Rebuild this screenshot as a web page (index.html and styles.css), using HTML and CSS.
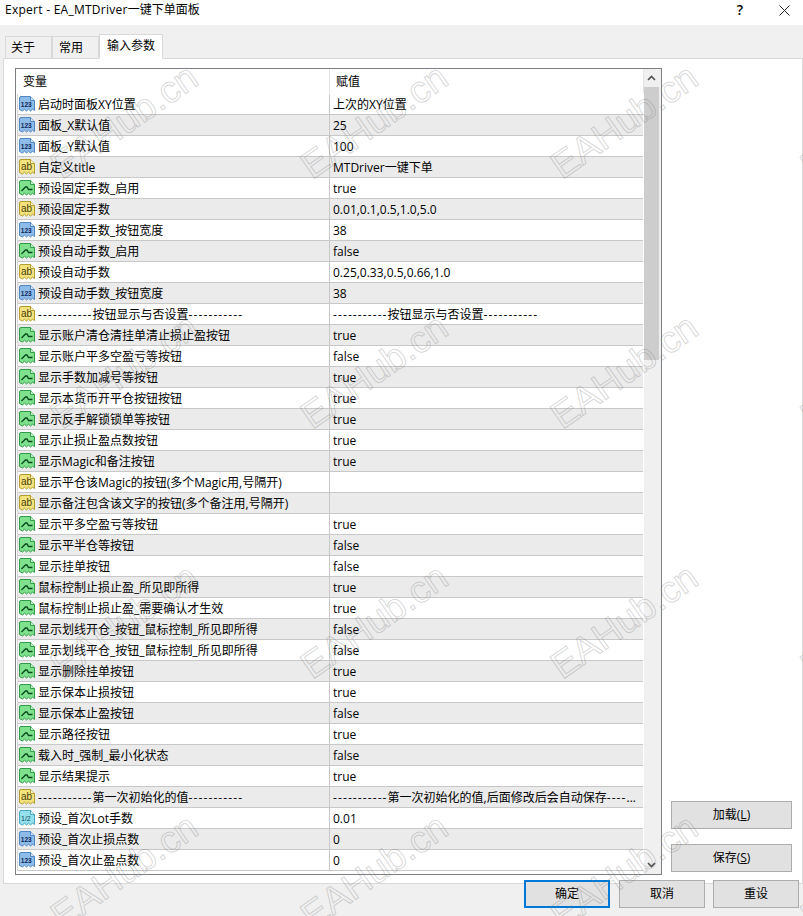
FILE: index.html
```html
<!DOCTYPE html>
<html lang="zh-CN">
<head>
<meta charset="utf-8">
<title>Expert - EA_MTDriver一键下单面板</title>
<link rel="stylesheet" href="styles.css">
</head>
<body>
<svg class="sprite" aria-hidden="true">
  <symbol id="i-blue" viewBox="0 0 16 16">
    <path class="doc-blue" d="M.5 2Q.5.5 2 .5H11.5L15.5 4.5V14.5L13.5 13.2 11.5 15 9.5 13.2 7.5 15 5.5 13.2 3.5 15 .5 13.5Z"/>
    <path class="fold-blue" d="M11.5.5V4.5H15.5"/>
    <text class="ico-num" x="1.7" y="11">123</text>
  </symbol>
  <symbol id="i-yellow" viewBox="0 0 16 16">
    <path class="doc-yellow" d="M.5 2Q.5.5 2 .5H11.5L15.5 4.5V14.5L13.5 13.2 11.5 15 9.5 13.2 7.5 15 5.5 13.2 3.5 15 .5 13.5Z"/>
    <path class="fold-yellow" d="M11.5.5V4.5H15.5"/>
    <text class="ico-ab" x="2" y="11">ab</text>
  </symbol>
  <symbol id="i-green" viewBox="0 0 16 16">
    <path class="doc-green" d="M.5 2Q.5.5 2 .5H11.5L15.5 4.5V14.5L13.5 13.2 11.5 15 9.5 13.2 7.5 15 5.5 13.2 3.5 15 .5 13.5Z"/>
    <path class="fold-green" d="M11.5.5V4.5H15.5"/>
    <path class="zig" d="M2.5 11L6.5 7H8L9.5 9.5H13.5"/>
  </symbol>
  <symbol id="i-cyan" viewBox="0 0 16 16">
    <path class="doc-cyan" d="M.5 2Q.5.5 2 .5H11.5L15.5 4.5V14.5L13.5 13.2 11.5 15 9.5 13.2 7.5 15 5.5 13.2 3.5 15 .5 13.5Z"/>
    <path class="fold-cyan" d="M11.5.5V4.5H15.5"/>
    <text class="ico-frac" x="2" y="10.5">1/2</text>
  </symbol>
</svg>
<div class="window">
  <header class="titlebar">
    <div class="title"><span class="title-latin">Expert - EA_MTDriver</span>一键下单面板</div>
    <div class="help">?</div>
    <svg class="close" viewBox="0 0 11 11" aria-hidden="true"><path d="M.5.5L10.5 10.5M10.5.5L.5 10.5"/></svg>
  </header>
  <nav class="tabs">
    <div class="tab">关于</div>
    <div class="tab tab-two">常用</div>
    <div class="tab tab-on">输入参数</div>
  </nav>
  <main class="panel">
    <section class="list">
      <div class="table">
        <div class="head"><div class="head-name">变量</div><div class="head-val">赋值</div></div>
        <div class="rows">
          <div class="row"><div class="name"><svg class="ico"><use href="#i-blue"/></svg>启动时面板XY位置</div><div class="val">上次的XY位置</div></div>
          <div class="row"><div class="name"><svg class="ico"><use href="#i-blue"/></svg>面板_X默认值</div><div class="val">25</div></div>
          <div class="row"><div class="name"><svg class="ico"><use href="#i-blue"/></svg>面板_Y默认值</div><div class="val">100</div></div>
          <div class="row"><div class="name"><svg class="ico"><use href="#i-yellow"/></svg>自定义title</div><div class="val">MTDriver一键下单</div></div>
          <div class="row"><div class="name"><svg class="ico"><use href="#i-green"/></svg>预设固定手数_启用</div><div class="val">true</div></div>
          <div class="row"><div class="name"><svg class="ico"><use href="#i-yellow"/></svg>预设固定手数</div><div class="val">0.01,0.1,0.5,1.0,5.0</div></div>
          <div class="row"><div class="name"><svg class="ico"><use href="#i-blue"/></svg>预设固定手数_按钮宽度</div><div class="val">38</div></div>
          <div class="row"><div class="name"><svg class="ico"><use href="#i-green"/></svg>预设自动手数_启用</div><div class="val">false</div></div>
          <div class="row"><div class="name"><svg class="ico"><use href="#i-yellow"/></svg>预设自动手数</div><div class="val">0.25,0.33,0.5,0.66,1.0</div></div>
          <div class="row"><div class="name"><svg class="ico"><use href="#i-blue"/></svg>预设自动手数_按钮宽度</div><div class="val">38</div></div>
          <div class="row"><div class="name"><svg class="ico"><use href="#i-yellow"/></svg><span class="dash">-----------</span>按钮显示与否设置<span class="dash">-----------</span></div><div class="val"><span class="dash">-----------</span>按钮显示与否设置<span class="dash">-----------</span></div></div>
          <div class="row"><div class="name"><svg class="ico"><use href="#i-green"/></svg>显示账户清仓清挂单清止损止盈按钮</div><div class="val">true</div></div>
          <div class="row"><div class="name"><svg class="ico"><use href="#i-green"/></svg>显示账户平多空盈亏等按钮</div><div class="val">false</div></div>
          <div class="row"><div class="name"><svg class="ico"><use href="#i-green"/></svg>显示手数加减号等按钮</div><div class="val">true</div></div>
          <div class="row"><div class="name"><svg class="ico"><use href="#i-green"/></svg>显示本货币开平仓按钮按钮</div><div class="val">true</div></div>
          <div class="row"><div class="name"><svg class="ico"><use href="#i-green"/></svg>显示反手解锁锁单等按钮</div><div class="val">true</div></div>
          <div class="row"><div class="name"><svg class="ico"><use href="#i-green"/></svg>显示止损止盈点数按钮</div><div class="val">true</div></div>
          <div class="row"><div class="name"><svg class="ico"><use href="#i-green"/></svg>显示Magic和备注按钮</div><div class="val">true</div></div>
          <div class="row"><div class="name"><svg class="ico"><use href="#i-yellow"/></svg>显示平仓该Magic的按钮(多个Magic用,号隔开)</div><div class="val"></div></div>
          <div class="row"><div class="name"><svg class="ico"><use href="#i-yellow"/></svg>显示备注包含该文字的按钮(多个备注用,号隔开)</div><div class="val"></div></div>
          <div class="row"><div class="name"><svg class="ico"><use href="#i-green"/></svg>显示平多空盈亏等按钮</div><div class="val">true</div></div>
          <div class="row"><div class="name"><svg class="ico"><use href="#i-green"/></svg>显示平半仓等按钮</div><div class="val">false</div></div>
          <div class="row"><div class="name"><svg class="ico"><use href="#i-green"/></svg>显示挂单按钮</div><div class="val">false</div></div>
          <div class="row"><div class="name"><svg class="ico"><use href="#i-green"/></svg>鼠标控制止损止盈_所见即所得</div><div class="val">true</div></div>
          <div class="row"><div class="name"><svg class="ico"><use href="#i-green"/></svg>鼠标控制止损止盈_需要确认才生效</div><div class="val">true</div></div>
          <div class="row"><div class="name"><svg class="ico"><use href="#i-green"/></svg>显示划线开仓_按钮_鼠标控制_所见即所得</div><div class="val">false</div></div>
          <div class="row"><div class="name"><svg class="ico"><use href="#i-green"/></svg>显示划线平仓_按钮_鼠标控制_所见即所得</div><div class="val">false</div></div>
          <div class="row"><div class="name"><svg class="ico"><use href="#i-green"/></svg>显示删除挂单按钮</div><div class="val">true</div></div>
          <div class="row"><div class="name"><svg class="ico"><use href="#i-green"/></svg>显示保本止损按钮</div><div class="val">true</div></div>
          <div class="row"><div class="name"><svg class="ico"><use href="#i-green"/></svg>显示保本止盈按钮</div><div class="val">false</div></div>
          <div class="row"><div class="name"><svg class="ico"><use href="#i-green"/></svg>显示路径按钮</div><div class="val">true</div></div>
          <div class="row"><div class="name"><svg class="ico"><use href="#i-green"/></svg>载入时_强制_最小化状态</div><div class="val">false</div></div>
          <div class="row"><div class="name"><svg class="ico"><use href="#i-green"/></svg>显示结果提示</div><div class="val">true</div></div>
          <div class="row"><div class="name"><svg class="ico"><use href="#i-yellow"/></svg><span class="dash">-----------</span>第一次初始化的值<span class="dash">-----------</span></div><div class="val"><span class="dash">-----------</span>第一次初始化的值,后面修改后会自动保存<span class="dash">----</span>...</div></div>
          <div class="row"><div class="name"><svg class="ico"><use href="#i-cyan"/></svg>预设_首次Lot手数</div><div class="val">0.01</div></div>
          <div class="row"><div class="name"><svg class="ico"><use href="#i-blue"/></svg>预设_首次止损点数</div><div class="val">0</div></div>
          <div class="row"><div class="name"><svg class="ico"><use href="#i-blue"/></svg>预设_首次止盈点数</div><div class="val">0</div></div>
        </div>
      </div>
      <div class="scrollbar">
        <div class="sb-btn"><svg class="chev" viewBox="0 0 9 6" aria-hidden="true"><path d="M1 5L4.5 1.5 8 5"/></svg></div>
        <div class="sb-thumb"></div>
        <div class="sb-track"></div>
        <div class="sb-btn"><svg class="chev" viewBox="0 0 9 6" aria-hidden="true"><path d="M1 1L4.5 4.5 8 1"/></svg></div>
      </div>
    </section>
    <aside class="side">
      <button class="btn btn-side">加载(<u>L</u>)</button>
      <button class="btn btn-side">保存(<u>S</u>)</button>
    </aside>
  </main>
  <footer class="footer">
    <button class="btn btn-foot btn-default">确定</button>
    <button class="btn btn-foot">取消</button>
    <button class="btn btn-foot">重设</button>
  </footer>
  <div class="marks" aria-hidden="true">
    <span class="mark">EAHub.cn</span><span class="mark">EAHub.cn</span><span class="mark">EAHub.cn</span><span class="mark">EAHub.cn</span>
    <span class="mark">EAHub.cn</span><span class="mark">EAHub.cn</span><span class="mark">EAHub.cn</span><span class="mark">EAHub.cn</span>
    <span class="mark">EAHub.cn</span><span class="mark">EAHub.cn</span><span class="mark">EAHub.cn</span><span class="mark">EAHub.cn</span>
    <span class="mark">EAHub.cn</span><span class="mark">EAHub.cn</span><span class="mark">EAHub.cn</span><span class="mark">EAHub.cn</span>
  </div>
</div>
</body>
</html>
```
FILE: styles.css
```css
* { box-sizing: border-box; }
html, body { margin: 0; padding: 0; }
body {
  font-family: "Open Sans", "Noto Sans CJK SC", sans-serif;
  font-size: 12px;
  color: #000;
  background: #f0f0f0;
}
.sprite { display: none; }
.window {
  position: relative;
  width: 803px;
  height: 916px;
  overflow: hidden;
  background: #f0f0f0;
  display: flex;
  flex-direction: column;
}
.titlebar {
  height: 25px;
  flex: none;
  background: #fff;
  display: flex;
  align-items: center;
  padding: 0 13px 5px 5px;
  line-height: 20px;
}
.title { flex: 1; font-size: 12px; }
.title-latin { letter-spacing: .26px; }
.help { font-size: 14px; font-weight: 600; margin-right: 36px; line-height: 18px; }
.close { width: 11px; height: 11px; fill: none; stroke: #222; stroke-width: 1; }

.tabs {
  height: 34px;
  flex: none;
  margin-bottom: -1px;
  padding: 9px 0 0 5px;
  display: flex;
  align-items: flex-end;
  position: relative;
  z-index: 1;
}
.tab {
  height: 23px;
  width: 47px;
  border: 1px solid #d9d9d9;
  background: #f0f0f0;
  line-height: 21px;
  padding-left: 5px;
}
.tab-two { padding-left: 6px; }
.tab-on {
  width: 64px;
  height: 25px;
  background: #fff;
  border-bottom-color: #fff;
  padding-left: 7px;
  line-height: 22px;
}

.panel {
  height: 826px;
  flex: none;
  margin-left: 3px;
  width: 800px;
  background: #fff;
  border: 1px solid #d9d9d9;
  padding: 9px 0 0 11px;
  display: flex;
}
.list {
  width: 647px;
  height: 807px;
  flex: none;
  border: 1px solid #7c8085;
  display: flex;
  background: #fff;
}
.table { width: 628px; flex: none; }
.head {
  height: 25px;
  display: flex;
  line-height: 25px;
}
.head-name { width: 314px; padding-left: 7px; border-right: 1px solid #e5e5e5; height: 24px; }
.head-val { padding-left: 6px; flex: 1; border-right: 1px solid #e5e5e5; height: 24px; }
.rows { margin-left: 1px; width: 626px; border-left: 1px solid #d8d8d8; }
.row {
  height: 21px;
  display: flex;
  border-bottom: 1px solid #c8c8c8;
  background: #fff;
  line-height: 21px;
}
.row:nth-child(even) { background: #ebebeb; }
.name {
  width: 312px;
  flex: none;
  border-right: 1px solid #c8c8c8;
  display: flex;
  align-items: center;
  white-space: nowrap;
  overflow: hidden;
  padding-left: 1px;
}
.val {
  flex: 1;
  min-width: 0;
  padding-left: 3px;
  white-space: nowrap;
  overflow: hidden;
}
.dash { letter-spacing: 1.1px; }
.ico { width: 16px; height: 16px; flex: none; margin-right: 3px; }

.doc-blue { fill: #8fbbe8; stroke: #4f87c4; }
.fold-blue { fill: #d2e5f8; stroke: #4f87c4; }
.doc-yellow { fill: #f2e37f; stroke: #b29c2c; }
.fold-yellow { fill: #fbf4c4; stroke: #b29c2c; }
.doc-green { fill: #7fe08e; stroke: #2f9c48; }
.fold-green { fill: #c8f4cf; stroke: #2f9c48; }
.doc-cyan { fill: #93dfeb; stroke: #42a6c0; }
.fold-cyan { fill: #d6f4f9; stroke: #42a6c0; }
.zig { fill: none; stroke: #07491a; stroke-width: 1.3; }
.ico-num, .ico-ab, .ico-frac { font-family: "Liberation Sans", sans-serif; }
.ico-num { font-size: 6.5px; font-weight: 700; fill: #0a2656; letter-spacing: .1px; }
.ico-ab { font-size: 10px; fill: #4a3c04; }
.ico-frac { font-size: 7px; fill: #0f4c60; }

.scrollbar {
  width: 17px;
  flex: none;
  background: #f0f0f0;
  display: flex;
  flex-direction: column;
  padding-right: 2px;
}
.sb-btn { height: 18px; flex: none; display: flex; align-items: center; justify-content: center; }
.sb-thumb { height: 273px; flex: none; background: #cdcdcd; }
.sb-track { flex: 1; }
.chev { width: 9px; height: 6px; fill: none; stroke: #505050; stroke-width: 1.6; }

.side {
  width: 121px;
  margin-left: 9px;
  flex: none;
  display: flex;
  flex-direction: column;
  justify-content: flex-end;
  gap: 15px;
  padding-bottom: 11px;
}
.btn {
  font: inherit;
  color: #000;
  background: #e1e1e1;
  border: 1px solid #adadad;
  padding: 0;
  line-height: 18px;
}
.btn-side { height: 28px; width: 121px; }
.footer {
  height: 28px;
  flex: none;
  margin-top: -4px;
  padding-right: 4px;
  display: flex;
  justify-content: flex-end;
  gap: 8px;
  position: relative;
}
.btn-foot { width: 86px; height: 28px; }
.btn-default { border: 2px solid #0078d7; margin-right: 1px; }

.marks {
  position: absolute;
  left: -1px;
  top: -4px;
  display: grid;
  grid-template-columns: repeat(4, 250px);
  grid-auto-rows: 250px;
  pointer-events: none;
}
.mark {
  display: flex;
  align-items: center;
  justify-content: center;
  font-family: "Liberation Sans", sans-serif;
  font-size: 37.5px;
  white-space: nowrap;
  color: transparent;
  -webkit-text-stroke: 1px rgba(120, 120, 120, .3);
  transform: rotate(-35deg);
}
```
